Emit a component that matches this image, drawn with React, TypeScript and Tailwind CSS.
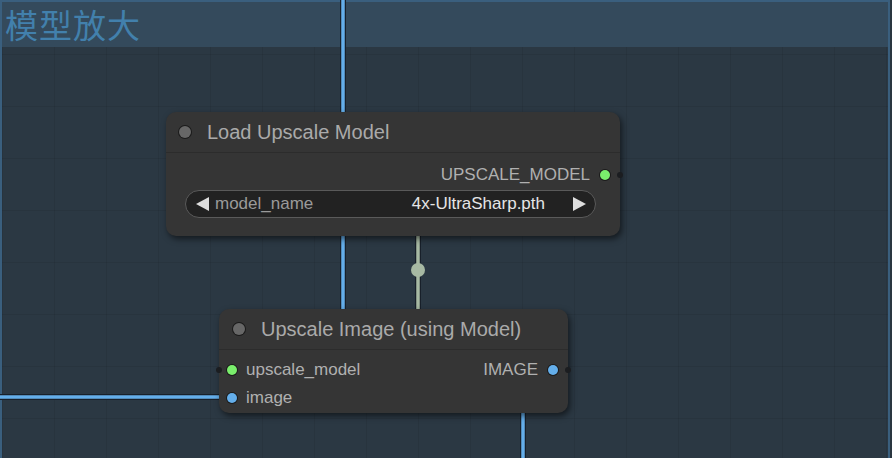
const wireBlue = "#64aeea";
const wireModel = "#a7b9a3";

function Dot({ color, size = 10 }: { color: string; size?: number }) {
  return (
    <span
      className="inline-block shrink-0 rounded-full ring-1 ring-black/50"
      style={{ width: size, height: size, background: color }}
    />
  );
}

function Arrow({ dir }: { dir: "left" | "right" }) {
  return (
    <svg width={13} height={14} viewBox="0 0 13 14" className="shrink-0">
      <polygon
        points={dir === "left" ? "13,0 13,14 0,7" : "0,0 0,14 13,7"}
        fill="#dedede"
      />
    </svg>
  );
}

function Wires() {
  const seg = (d: string, color: string) => (
    <g>
      <path d={d} stroke="#18202a" strokeWidth={6} fill="none" />
      <path d={d} stroke={color} strokeWidth={3.5} fill="none" />
    </g>
  );
  return (
    <svg className="absolute inset-0 z-0" width={892} height={458}>
      {seg("M343 0 L343 312", wireBlue)}
      {seg("M0 397 L222 397", wireBlue)}
      {seg("M523 410 L523 458", wireBlue)}
      {seg("M418 233 L418 312", wireModel)}
      <circle cx={418} cy={270} r={7} fill={wireModel} />
    </svg>
  );
}

export default function App() {
  return (
    <div
      className="relative h-[458px] w-[892px] overflow-hidden bg-[#2a3640]"
      style={{ fontFamily: '"Liberation Sans", Arial, sans-serif' }}
    >
      {/* group */}
      <div className="absolute inset-y-0 left-0 w-[890px] border-x-2 border-t-2 border-[#3a5f7e] bg-[#2b3843] bg-[linear-gradient(rgba(0,0,0,0.07)_1px,transparent_1px),linear-gradient(90deg,rgba(0,0,0,0.07)_1px,transparent_1px)] bg-[size:52px_52px]">
        <div className="flex h-[45px] items-center bg-[#344a5c] px-[3px]">
          <span
            className="text-[33px] leading-none tracking-[1px] text-[#4280ac]"
            style={{ fontFamily: '"Noto Sans CJK SC", sans-serif' }}
          >
            模型放大
          </span>
        </div>
      </div>

      <Wires />

      {/* Load Upscale Model */}
      <div className="absolute left-[166px] top-[112px] z-10 w-[454px] rounded-[10px] bg-[#353535] shadow-[2px_3px_6px_rgba(0,0,0,0.55)]">
        <div className="flex h-[41px] items-center gap-[16px] border-b border-[#2c2c2c] pl-[13px]">
          <Dot color="#676767" size={12} />
          <span className="text-[20px] text-[#aaaaaa]">Load Upscale Model</span>
        </div>
        <div className="pb-[18px] pt-[9px]">
          <div className="relative flex h-[26px] items-center justify-end gap-[10px] pr-[10px]">
            <span className="text-[17px] text-[#b0b0b0]">UPSCALE_MODEL</span>
            <Dot color="#7aee6c" />
            <span className="absolute -right-[3px] top-[10px] h-[6px] w-[6px] rounded-full bg-[#1b1d20]" />
          </div>
          <div className="ml-[19px] mr-[24px] mt-[2px] flex h-[28px] items-center rounded-full border border-[#5a5a5a] bg-[#222222] pl-[10px] pr-[9px] text-[17px]">
            <Arrow dir="left" />
            <span className="ml-[6px] text-[#9a9a9a]">model_name</span>
            <span className="ml-auto text-[#e6e6e6]">4x-UltraSharp.pth</span>
            <span className="ml-[28px] flex">
              <Arrow dir="right" />
            </span>
          </div>
        </div>
      </div>

      {/* Upscale Image (using Model) */}
      <div className="absolute left-[219px] top-[309px] z-10 w-[349px] rounded-[10px] bg-[#353535] shadow-[2px_3px_6px_rgba(0,0,0,0.55)]">
        <div className="flex h-[41px] items-center gap-[16px] border-b border-[#2c2c2c] pl-[14px]">
          <Dot color="#676767" size={12} />
          <span className="text-[20px] text-[#aaaaaa]">Upscale Image (using Model)</span>
        </div>
        <div className="flex flex-col gap-[2px] pb-[2px] pt-[7px] text-[17px] text-[#b0b0b0]">
          <div className="relative flex h-[26px] items-center pl-[8px] pr-[10px]">
            <span className="absolute -left-[3px] top-[10px] h-[6px] w-[6px] rounded-full bg-[#1b1d20]" />
            <Dot color="#7aee6c" />
            <span className="ml-[9px]">upscale_model</span>
            <span className="ml-auto">IMAGE</span>
            <span className="ml-[10px] flex">
              <Dot color="#64aeea" />
            </span>
            <span className="absolute -right-[3px] top-[10px] h-[6px] w-[6px] rounded-full bg-[#1b1d20]" />
          </div>
          <div className="flex h-[26px] items-center pl-[8px]">
            <Dot color="#64aeea" />
            <span className="ml-[9px]">image</span>
          </div>
        </div>
      </div>
    </div>
  );
}
